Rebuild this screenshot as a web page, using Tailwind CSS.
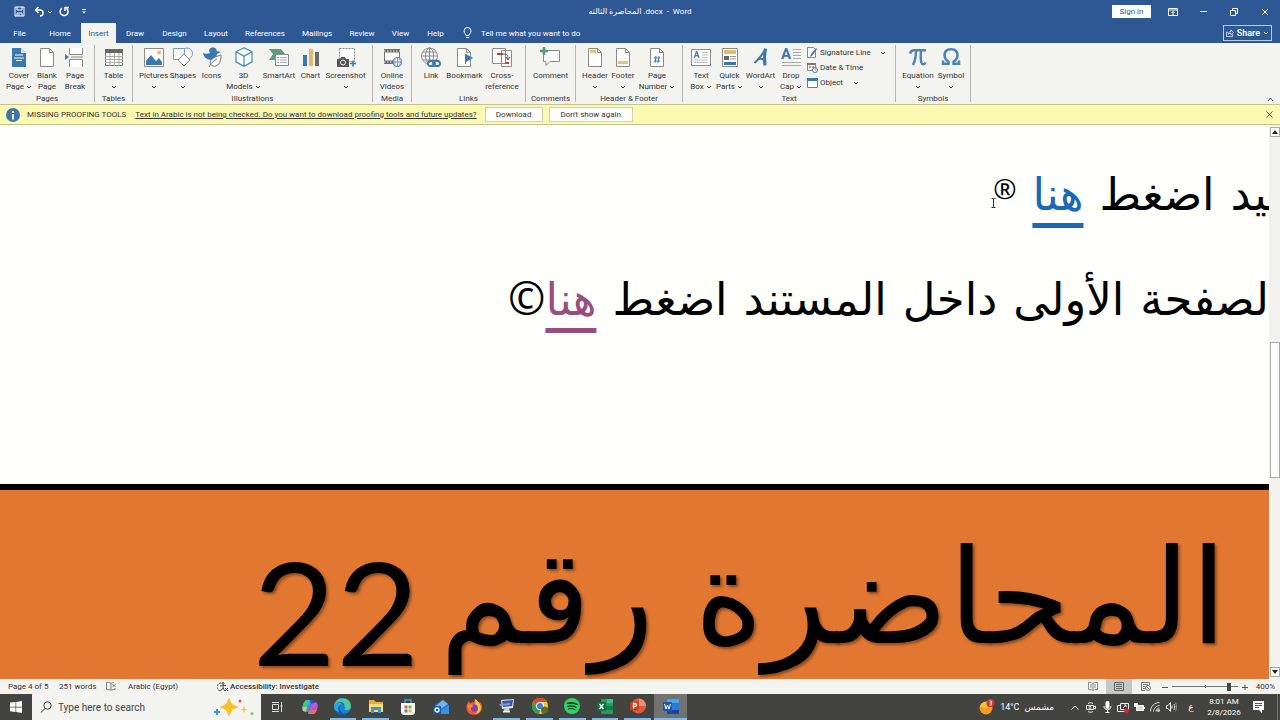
<!DOCTYPE html>
<html lang="en">
  <head>
    <meta charset="UTF-8" />
    <meta name="viewport" content="width=device-width, initial-scale=1.0" />
    <title>المحاضرة الثالثه .docx - Word</title>
    <script src="https://cdn.jsdelivr.net/npm/@tailwindcss/browser@4"></script>
  </head>
  <body class="flex flex-col h-screen overflow-hidden bg-[#fffffc] font-['Roboto','DejaVu_Sans',sans-serif] text-[8px] leading-[11px] text-[#333]">
    <svg class="hidden">
      <symbol id="chev" viewBox="0 0 6 4"><path d="M1 1l2 2 2-2" fill="none" stroke="currentColor" /></symbol>
    </svg>

    <header class="bg-[#2d5894] text-white">
      <!-- Title bar -->
      <div class="grid grid-cols-[1fr_auto_1fr] items-center h-[23px]">
        <div class="flex items-center pl-[14px]">
          <button aria-label="Save"><svg class="w-[11px] h-[11px]" viewBox="0 0 11 11" fill="none" stroke="#fff"><path d="M1 1h9v9H1zM3 1v3h5V1M3 10V7h5v3M5 8v2" /></svg></button>
          <button aria-label="Undo" class="ml-[9px]"><svg class="w-[11px] h-[11px]" viewBox="0 0 11 11" fill="none" stroke="#fff" stroke-width="1.5"><path d="M4.500 1L1.500 4l3 3M1.500 4H6a3 3 0 013 3c0 2-1 3-3 3" /></svg></button>
          <button aria-label="Undo list" class="ml-[2px]"><svg class="w-[6px] h-[4px]"><use href="#chev" /></svg></button>
          <button aria-label="Repeat" class="ml-[6px]"><svg class="w-[11px] h-[11px]" viewBox="0 0 11 11" fill="none" stroke="#fff" stroke-width="1.500"><path d="M3 2.200a4 4 0 104.500.2M6 1v4M6 1.500h4" /></svg></button>
          <button aria-label="Customize toolbar" class="ml-[12px]"><svg class="w-[4px] h-[5px]" viewBox="0 0 5 6" fill="#fff"><path d="M0 0h5v1H0zM0 3h5L2.500 5.500z" /></svg></button>
        </div>
        <h1 class="whitespace-pre"><bdi>المحاضرة الثالثه</bdi> .docx  -  Word</h1>
        <div class="flex items-center justify-end pr-[11px]">
          <button class="bg-white text-[#2d5894] w-[39px] h-[13px]">Sign in</button>
          <button aria-label="Ribbon display options" class="ml-[17px]"><svg class="w-[10px] h-[8px]" viewBox="0 0 10 8" fill="none" stroke="#fff"><path d="M.500.500h9v7h-9zM.500 2h9M5 7V3.500M3.500 5L5 3.500 6.500 5" /></svg></button>
          <button aria-label="Minimize" class="ml-[22px]"><svg class="w-[7px] h-[7px]" viewBox="0 0 7 7"><path d="M0 3.500h7" stroke="#fff" /></svg></button>
          <button aria-label="Restore" class="ml-[23px]"><svg class="w-[8px] h-[8px]" viewBox="0 0 8 8" fill="none" stroke="#fff"><path d="M.500 2.500h5v5h-5zM2.500 2V.500h5v5H6" /></svg></button>
          <button aria-label="Close" class="ml-[23px]"><svg class="w-[8px] h-[8px]" viewBox="0 0 8 8"><path d="M1 1l6 6M7 1L1 7" stroke="#fff" /></svg></button>
        </div>
      </div>
      <!-- Tabs -->
      <nav class="flex items-stretch h-[20px]">
        <button class="w-[39px]">File</button>
        <button class="w-[42px]">Home</button>
        <button class="w-[35px] bg-[#f3f3f0] text-[#2d5894]">Insert</button>
        <button class="w-[38px]">Draw</button>
        <button class="w-[41px]">Design</button>
        <button class="w-[42px]">Layout</button>
        <button class="w-[56px]">References</button>
        <button class="w-[48px]">Mailings</button>
        <button class="w-[42px]">Review</button>
        <button class="w-[35px]">View</button>
        <button class="w-[35px]">Help</button>
        <button class="flex items-center gap-[9px] ml-[10px]">
          <svg class="w-[9px] h-[12px]" viewBox="0 0 9 12" fill="none" stroke="#fff"><path d="M3 8.500C3 7 1 6 1 4a3.500 3.500 0 017 0c0 2-2 3-2 4.500zM3 10.500h3" /></svg>
          Tell me what you want to do
        </button>
        <button class="flex items-center gap-[3px] ml-auto mr-[8px] my-[2px] px-[2px] border border-[#b9cbe5] font-semibold text-[9px]">
          <svg class="w-[8px] h-[8px]" viewBox="0 0 9 9" fill="none" stroke="#fff"><path d="M2 3.500H.500v5h7V6M2.500 6c0-2 1-3 3-3V1L8.500 4l-3 2.500V5c-1.500 0-2 0-3 1z" stroke-width=".8" /></svg>
          Share
          <svg class="w-[6px] h-[4px]"><use href="#chev" /></svg>
        </button>
      </nav>
    </header>

    <!-- Ribbon -->
    <section class="flex h-[62px] pt-[2px] pb-[2px] bg-[#f3f3f0] border-b border-[#c4c38b]">
      <div class="flex flex-col justify-between items-center w-[95px] border-r border-[#b5b5b3]">
        <div class="flex">
          <button class="flex flex-col items-center w-[28px] pt-[2px]">
            <svg class="w-[20px] h-[20px] mb-[3px]" viewBox="0 0 20 20"><path d="M3 1h9l5 5v14H3z" fill="#3a78b0" /><path d="M12 1v5h5z" fill="#d5e4f2" /><path d="M6 8h8M5 11h10M7 13.500h6" stroke="#fff" /></svg>
            Cover<span class="flex items-center gap-[2px]">Page <svg class="w-[6px] h-[4px]"><use href="#chev" /></svg></span>
          </button>
          <button class="flex flex-col items-center w-[28px] pt-[2px]">
            <svg class="w-[20px] h-[20px] mb-[3px]" viewBox="0 0 20 20" fill="#fff" stroke="#8a8a88"><path d="M3.500 1.500h9l4 4v14h-13zM12.500 1.500v4h4" /></svg>
            Blank<span>Page</span>
          </button>
          <button class="flex flex-col items-center w-[28px] pt-[2px]">
            <svg class="w-[20px] h-[20px] mb-[3px]" viewBox="0 0 20 20"><path d="M4.500 1v6.500h13V1M4.500 20v-7.500h13V20" fill="#fff" stroke="#8a8a88" /><path d="M6 10h12" stroke="#8a8a88" /><path d="M0 7l4 3-4 3z" fill="#3a78b0" /></svg>
            Page<span>Break</span>
          </button>
        </div>
        <h2 class="leading-[7px]">Pages</h2>
      </div>

      <div class="flex flex-col justify-between items-center w-[38px] border-r border-[#b5b5b3]">
        <button class="flex flex-col items-center pt-[2px]">
          <svg class="w-[20px] h-[20px] mb-[3px]" viewBox="0 0 20 20"><path d="M1.500 2.500h17v16h-17z" fill="#fff" stroke="#777" /><path d="M1 2h18v4H1z" fill="#666" /><path d="M1 9.500h18M1 12.500h18M1 15.500h18M6 6v13M10.500 6v13M15 6v13" stroke="#aaa" /></svg>
          Table<svg class="w-[6px] h-[4px] mt-[4px]"><use href="#chev" /></svg>
        </button>
        <h2 class="leading-[7px]">Tables</h2>
      </div>

      <div class="flex flex-col justify-between items-center w-[240px] border-r border-[#b5b5b3]">
        <div class="flex items-start">
          <button class="flex flex-col items-center w-[32px] pt-[2px]">
            <svg class="w-[20px] h-[20px] mb-[3px]" viewBox="0 0 20 20"><path d="M.500 1.500h19v18H.500z" fill="#fff" stroke="#8a8a88" /><path d="M2 18v-4l5-6 5 6 3-3 3 4v3z" fill="#3a78b0" /><circle cx="15" cy="5.500" r="2" fill="#e9bd5b" /></svg>
            Pictures<svg class="w-[6px] h-[4px] mt-[4px]"><use href="#chev" /></svg>
          </button>
          <button class="flex flex-col items-center w-[27px] pt-[2px]">
            <svg class="w-[20px] h-[20px] mb-[3px]" viewBox="0 0 20 20" fill="#fff" stroke="#6a9cc8"><circle cx="14" cy="6.500" r="5.500" /><path d="M.500 1.500h11v11H.500z" /><path d="M11 7l6 6-6 6-6-6z" stroke="#8a8a88" /></svg>
            Shapes<svg class="w-[6px] h-[4px] mt-[4px]"><use href="#chev" /></svg>
          </button>
          <button class="flex flex-col items-center w-[30px] pt-[2px]">
            <svg class="w-[20px] h-[20px] mb-[3px]" viewBox="0 0 20 20"><path d="M1 6c2 1 5 1 7 0C6 3 8 0 11.500.500 14 1 15 3 14.500 4L19 5l-4 2c-1 2 0 2 0 3-2 4-12 5-14-4z" fill="#3a78b0" /><path d="M19 8c0 8-3 12-8 11-5-2-4-8 8-11zM7 20c2-4 4-6 8-8" fill="#fff" stroke="#777" /></svg>
            Icons
          </button>
          <button class="flex flex-col items-center w-[34px] pt-[2px]">
            <svg class="w-[20px] h-[20px] mb-[3px]" viewBox="0 0 20 20" fill="#fff" stroke="#3a86b8" stroke-width="1.200"><path d="M10 .800l8 4v10l-8 4.500-8-4.500v-10zM2 4.800l8 4.500 8-4.500M10 9.300v10" /></svg>
            3D<span class="flex items-center gap-[2px]">Models <svg class="w-[6px] h-[4px]"><use href="#chev" /></svg></span>
          </button>
          <button class="flex flex-col items-center w-[37px] pt-[2px]">
            <svg class="w-[20px] h-[20px] mb-[3px]" viewBox="0 0 20 20"><path d="M0 2h12l4 5-4 6H0l4-6z" fill="#5d9c80" /><path d="M6.500 7.500h13v11h-13z" fill="#fff" stroke="#8a8a88" /><path d="M8 10.500h2M11 10.500h7M8 13h2M11 13h7M8 15.500h2M11 15.500h7" stroke="#aaa" /></svg>
            SmartArt
          </button>
          <button class="flex flex-col items-center w-[26px] pt-[2px]">
            <svg class="w-[20px] h-[20px] mb-[3px]" viewBox="0 0 20 20"><path d="M2 8h4v11H2z" fill="#3a78b0" /><path d="M8 2h4v17H8z" fill="#e6b865" /><path d="M14 5h4v14h-4z" fill="#6a6a68" /></svg>
            Chart
          </button>
          <button class="flex flex-col items-center w-[44px] pt-[2px]">
            <svg class="w-[20px] h-[20px] mb-[3px]" viewBox="0 0 20 20"><path d="M3.500 1.500h15v13h-15z" fill="#fff" stroke="#888" stroke-dasharray="2 1" /><path d="M1 12h3l1-2h4l1 2h3v8H1z" fill="#555" /><circle cx="7" cy="15.500" r="2.500" fill="#555" stroke="#fff" /><path d="M17 13.500v6M14 16.500h6" stroke="#3a78b0" stroke-width="1.500" /></svg>
            Screenshot<svg class="w-[6px] h-[4px] mt-[4px]"><use href="#chev" /></svg>
          </button>
        </div>
        <h2 class="leading-[7px]">Illustrations</h2>
      </div>

      <div class="flex flex-col justify-between items-center w-[39px] border-r border-[#b5b5b3]">
        <button class="flex flex-col items-center pt-[2px]">
          <svg class="w-[20px] h-[20px] mb-[3px]" viewBox="0 0 20 20"><path d="M2.500 2.500h15v14h-15z" fill="#fff" stroke="#777" /><path d="M2 4h16M2 15h16" stroke="#666" stroke-width="3" /><path d="M2 4h16M2 15h16" stroke="#fff" stroke-dasharray="1.500 1.500" /><circle cx="15.500" cy="15" r="4.500" fill="#fff" stroke="#3a78b0" /><path d="M11 15h9M15.500 10.500v9M13.500 11.500c-1 2-1 5 0 7M17.500 11.500c1 2 1 5 0 7" stroke="#3a78b0" stroke-width=".7" fill="none" /></svg>
          Online<span>Videos</span>
        </button>
        <h2 class="leading-[7px]">Media</h2>
      </div>

      <div class="flex flex-col justify-between items-center w-[114px] border-r border-[#b5b5b3]">
        <div class="flex items-start">
          <button class="flex flex-col items-center w-[27px] pt-[2px]">
            <svg class="w-[20px] h-[20px] mb-[3px]" viewBox="0 0 20 20" fill="none"><g stroke="#888"><circle cx="8.500" cy="9" r="8" fill="#fff" /><ellipse cx="8.500" cy="9" rx="4" ry="8" /><path d="M8.500 1v16M.500 9h16M2 5h13M2 13h13" /></g><g stroke="#3a78b0" stroke-width="1.800"><rect x="7" y="14" width="7" height="5" rx="2.500" fill="#f3f3f0" /><rect x="12" y="14" width="7" height="5" rx="2.500" /></g></svg>
            Link
          </button>
          <button class="flex flex-col items-center w-[40px] pt-[2px]">
            <svg class="w-[20px] h-[20px] mb-[3px]" viewBox="0 0 20 20"><path d="M2.500 1.500h9l4 4v14h-13zM11.500 1.500v4h4" fill="#fff" stroke="#8a8a88" /><path d="M10.500 7v10" stroke="#3a78b0" /><path d="M11 7l7 4-7 4z" fill="#3a78b0" /></svg>
            Bookmark
          </button>
          <button class="flex flex-col items-center w-[35px] pt-[2px]">
            <svg class="w-[20px] h-[20px] mb-[3px]" viewBox="0 0 20 20"><path d="M.500 1.500h13v15H.500zM9.500 3.500h10v16h-10z" fill="#fff" stroke="#8a8a88" /><path d="M5 7h6M13 16h4" stroke="#c8402f" stroke-width="2" /><path d="M11 7c4 0 5 1 5 5M14 10l2 3 2-3" stroke="#555" fill="none" /></svg>
            Cross-<span>reference</span>
          </button>
        </div>
        <h2 class="leading-[7px]">Links</h2>
      </div>

      <div class="flex flex-col justify-between items-center w-[50px] border-r border-[#b5b5b3]">
        <button class="flex flex-col items-center pt-[2px]">
          <svg class="w-[20px] h-[20px] mb-[3px]" viewBox="0 0 20 20"><path d="M3.500 3.500h16v11H10l-4 4v-4H3.500z" fill="#fff" stroke="#8a8a88" /><path d="M4 0v8M0 4h8" stroke="#4c9c7c" stroke-width="2.500" /></svg>
          Comment
        </button>
        <h2 class="leading-[7px]">Comments</h2>
      </div>

      <div class="flex flex-col justify-between items-center w-[107px] border-r border-[#b5b5b3]">
        <div class="flex items-start">
          <button class="flex flex-col items-center w-[28px] pt-[2px]">
            <svg class="w-[20px] h-[20px] mb-[3px]" viewBox="0 0 20 20"><path d="M3.500 1.500h9l4 4v14h-13zM12.500 1.500v4h4" fill="#fff" stroke="#8a8a88" /><path d="M5 3h6v3H5z" fill="#e3c779" /></svg>
            Header<svg class="w-[6px] h-[4px] mt-[4px]"><use href="#chev" /></svg>
          </button>
          <button class="flex flex-col items-center w-[28px] pt-[2px]">
            <svg class="w-[20px] h-[20px] mb-[3px]" viewBox="0 0 20 20"><path d="M3.500 1.500h9l4 4v14h-13zM12.500 1.500v4h4" fill="#fff" stroke="#8a8a88" /><path d="M5 14h10v3H5z" fill="#e3c779" /></svg>
            Footer<svg class="w-[6px] h-[4px] mt-[4px]"><use href="#chev" /></svg>
          </button>
          <button class="flex flex-col items-center w-[40px] pt-[2px]">
            <svg class="w-[20px] h-[20px] mb-[3px]" viewBox="0 0 20 20"><path d="M3.500 1.500h9l4 4v14h-13zM12.500 1.500v4h4" fill="#fff" stroke="#8a8a88" /><path d="M9 9l-1 7M12 9l-1 7M7 11h6M7 14h6" stroke="#3a78b0" /></svg>
            Page<span class="flex items-center gap-[2px]">Number <svg class="w-[6px] h-[4px]"><use href="#chev" /></svg></span>
          </button>
        </div>
        <h2 class="leading-[7px]">Header &amp; Footer</h2>
      </div>

      <div class="flex flex-col justify-between items-center w-[213px] border-r border-[#b5b5b3]">
        <div class="flex items-start">
          <button class="flex flex-col items-center w-[28px] pt-[2px]">
            <svg class="w-[20px] h-[20px] mb-[3px]" viewBox="0 0 20 20"><path d="M.500 2.500h19v16H.500z" fill="#fff" stroke="#8a8a88" /><path d="M11 5.500h6M11 8h6M11 10.500h6M3 13h14M3 15.500h14" stroke="#bbb" /><text x="2.500" y="11" font-size="9" font-weight="700" fill="#3a78b0">A</text></svg>
            Text<span class="flex items-center gap-[2px]">Box <svg class="w-[6px] h-[4px]"><use href="#chev" /></svg></span>
          </button>
          <button class="flex flex-col items-center w-[29px] pt-[2px]">
            <svg class="w-[20px] h-[20px] mb-[3px]" viewBox="0 0 20 20"><path d="M2.500 1.500h15v18h-15z" fill="#fff" stroke="#8a8a88" /><path d="M4 3h12v4H4z" fill="#e3b96d" /><path d="M4 9h5v4H4z" fill="#666" /><path d="M10 9.500h6M10 12h6" stroke="#999" /><path d="M4 15h12v3H4z" fill="#3a78b0" /></svg>
            Quick<span class="flex items-center gap-[2px]">Parts <svg class="w-[6px] h-[4px]"><use href="#chev" /></svg></span>
          </button>
          <button class="flex flex-col items-center w-[33px] pt-[2px]">
            <svg class="w-[20px] h-[20px] mb-[3px]" viewBox="0 0 20 20" fill="none" stroke="#3a78b0"><path d="M3.500 16C7 13 11 8 14 3" stroke-width="2" /><path d="M14.500 1.500c-1 5-1.500 11-.500 17" stroke-width="3" /><path d="M7 12c3-1 5 0 8 1" stroke-width="2" /></svg>
            WordArt<svg class="w-[6px] h-[4px] mt-[4px]"><use href="#chev" /></svg>
          </button>
          <button class="flex flex-col items-center w-[28px] pt-[2px]">
            <svg class="w-[20px] h-[20px] mb-[3px]" viewBox="0 0 20 20"><path d="M12 2.500h8M12 5.500h8M12 8.500h8M12 11.500h8M1 15.500h19M1 18.500h19" stroke="#aaa" /><text x="0" y="12" font-size="15" font-weight="700" fill="#3a78b0">A</text></svg>
            Drop<span class="flex items-center gap-[2px]">Cap <svg class="w-[6px] h-[4px]"><use href="#chev" /></svg></span>
          </button>
          <div class="flex flex-col w-[86px] pl-[2px]">
            <button class="flex items-center h-[15px]">
              <svg class="w-[11px] h-[11px] mr-[2px]" viewBox="0 0 11 11"><path d="M.500.500h6l2 2v8h-8z" fill="#fff" stroke="#888" /><path d="M10 2L5 9l-2 .500L4 7l5-6z" fill="#3a78b0" /></svg>
              Signature Line<svg class="w-[6px] h-[4px] ml-auto mr-[5px]"><use href="#chev" /></svg>
            </button>
            <button class="flex items-center h-[15px]">
              <svg class="w-[11px] h-[11px] mr-[2px]" viewBox="0 0 11 11"><path d="M.500 1.500h8v7h-8z" fill="#fff" stroke="#888" /><path d="M0 1h9v2H0z" fill="#777" /><path d="M2 4h2v2H2zM5 4h2v2H5z" fill="#e09a4f" /><circle cx="8" cy="8" r="2.500" fill="#fff" stroke="#3a78b0" /><path d="M8 6.500V8h1.500" stroke="#3a78b0" fill="none" stroke-width=".7" /></svg>
              Date &amp; Time
            </button>
            <button class="flex items-center h-[15px]">
              <svg class="w-[11px] h-[11px] mr-[2px]" viewBox="0 0 11 11"><path d="M.500 1.500h10v9H.500z" fill="#fff" stroke="#777" /><path d="M0 1h11v3H0z" fill="#3a78b0" /></svg>
              Object<svg class="w-[6px] h-[4px] ml-[10px]"><use href="#chev" /></svg>
            </button>
          </div>
        </div>
        <h2 class="leading-[7px]">Text</h2>
      </div>

      <div class="flex flex-col justify-between items-center w-[75px] border-r border-[#b5b5b3]">
        <div class="flex">
          <button class="flex flex-col items-center w-[36px] pt-[2px]">
            <svg class="w-[20px] h-[20px] mb-[3px]" viewBox="0 0 20 20" fill="none" stroke="#4a84ba"><path d="M2 6.500C3 4 4 3.300 6 3.300h12" stroke-width="2.600" /><path d="M8 4c0 5-.500 9-3 14" stroke-width="2.400" /><path d="M13 4c-.500 6-.500 9 .500 12 1 2 3 1.500 4-.500" stroke-width="2.400" /></svg>
            Equation<svg class="w-[6px] h-[4px] mt-[4px]"><use href="#chev" /></svg>
          </button>
          <button class="flex flex-col items-center w-[30px] pt-[2px]">
            <svg class="w-[20px] h-[20px] mb-[3px]" viewBox="0 0 20 20" fill="none" stroke="#4a84ba" stroke-width="2.500"><path d="M2 13.500v3.300h5.500v-2C5 13 3.500 11 3.500 8.200 3.500 4.500 6 2.200 10 2.200s6.500 2.300 6.500 6c0 2.800-1.500 4.800-4 6.600v2H18v-3.300" /></svg>
            Symbol<svg class="w-[6px] h-[4px] mt-[4px]"><use href="#chev" /></svg>
          </button>
        </div>
        <h2 class="leading-[7px]">Symbols</h2>
      </div>
      <button aria-label="Collapse ribbon" class="self-end ml-auto mr-[6px]"><svg class="w-[7px] h-[5px]" viewBox="0 0 7 5"><path d="M1 4l2.500-3L6 4" fill="none" stroke="#444" /></svg></button>
    </section>

    <!-- Message bar -->
    <aside class="flex items-center h-[20px] pl-[6px] pr-[7px] bg-[#fcfab2] border-b border-[#c4c38b]">
      <svg class="w-[14px] h-[14px]" viewBox="0 0 14 14"><circle cx="7" cy="7" r="7" fill="#3c78ae" /><path d="M6 3h2v2H6zM6 6h2v5.500H6z" fill="#fff" /></svg>
      <span class="ml-[7px]">MISSING PROOFING TOOLS</span>
      <a href="#" class="ml-[9px] underline">Text in Arabic is not being checked. Do you want to download proofing tools and future updates?</a>
      <button class="ml-[8px] w-[58px] h-[15px] bg-white border border-[#d2d0a4]">Download</button>
      <button class="ml-[6px] w-[84px] h-[15px] bg-white border border-[#d2d0a4]">Don't show again</button>
      <button aria-label="Close message" class="ml-auto"><svg class="w-[7px] h-[7px]" viewBox="0 0 7 7"><path d="M.500.500l6 6M6.500.500l-6 6" stroke="#555" /></svg></button>
    </aside>

    <!-- Document -->
    <main class="relative flex flex-1 min-h-0">
      <article dir="rtl" class="flex flex-col flex-1 min-w-0 overflow-hidden text-black font-['DejaVu_Sans',sans-serif] whitespace-nowrap">
        <div class="h-[359px] shrink-0 pt-[34px] text-[45px] leading-[72px]">
          <p class="flex gap-[16px]">
            <span class="-mr-[12px]">ـيد</span>
            <span>اضغط</span>
            <a href="#" class="text-[#1c68b8] underline underline-offset-[13px] decoration-[5px]">هنا</a>
            <sup class="top-0 text-[28px] leading-[58px] font-['Open_Sans']">®</sup>
          </p>
          <p class="flex items-baseline gap-[16px] mt-[31px]">
            <span>لصفحة</span>
            <span>الأولى</span>
            <span>داخل</span>
            <span>المستند</span>
            <span>اضغط</span>
            <a href="#" class="text-[#984f7c] underline underline-offset-[13px] decoration-[5px]">هنا</a>
            <span class="-mr-[16px] font-['Open_Sans']">©</span>
          </p>
        </div>
        <div class="flex flex-1 min-h-0 gap-[40px] pr-[42px] pt-[12px] bg-[#e27732] border-t-[6px] border-black text-[132px] leading-[190px] text-shadow-[2px_2px_3px_#00000066]">
          <span>المحاضرة</span>
          <span>رقم</span>
          <span class="-mr-[20px] pt-[14px] text-[144px] font-['Lato']">22</span>
        </div>
      </article>
      <svg class="absolute left-[991px] top-[73px] w-[5px] h-[10px]" viewBox="0 0 5 10"><path d="M.500.500h1.500l.500.500.500-.500H4.500M2.500 1v8M.500 9.500h4" fill="none" stroke="#333" /></svg>
      <div class="flex flex-col items-center w-[11px] py-[2px] bg-[#f1f1ee]">
        <button aria-label="Scroll up" class="flex items-center justify-center w-[10px] h-[10px] bg-white border border-[#aaa]"><svg class="w-[6px] h-[4px]" viewBox="0 0 6 4"><path d="M0 4l3-4 3 4z" fill="#222" /></svg></button>
        <div class="w-[10px] h-[136px] mt-[205px] bg-white border border-[#aaa]"></div>
        <button aria-label="Scroll down" class="flex items-center justify-center w-[10px] h-[10px] mt-auto bg-white border border-[#aaa]"><svg class="w-[6px] h-[4px]" viewBox="0 0 6 4"><path d="M0 0l3 4 3-4z" fill="#222" /></svg></button>
      </div>
    </main>

    <!-- Status bar -->
    <div class="flex items-center h-[15px] pl-[8px] pr-[5px] bg-[#f3f3f0]">
      <span class="w-[51px]">Page 4 of 5</span>
      <span class="w-[47px]">251 words</span>
      <svg class="w-[10px] h-[9px]" viewBox="0 0 10 9" fill="none" stroke="#666"><path d="M5 1.500v6.500M5 1.500C4 .500 2 .500.500.500v7c1.500 0 3.500 0 4.500 1 1-1 2-1 4-1V6M5 1.500C6 .500 7 .500 8 .500M6.500 2l3 3M9.500 2l-3 3" stroke-width=".8" /></svg>
      <span class="w-[89px] pl-[12px]">Arabic (Egypt)</span>
      <button class="flex items-center gap-[2px] ml-[12px] font-medium">
        <svg class="w-[11px] h-[10px]" viewBox="0 0 11 10" fill="none" stroke="#444"><path d="M4 1a4 4 0 000 8" stroke-dasharray="2 1" /><circle cx="6" cy="1.500" r="1" /><path d="M3 4l6-.500M6 4v2L3.500 9M6 6l2 3M8 6l3 3M11 6L8 9" /></svg>
        Accessibility: Investigate
      </button>
      <div class="flex items-center ml-auto">
        <button aria-label="Read mode" class="flex justify-center w-[27px]"><svg class="w-[10px] h-[9px]" viewBox="0 0 10 9" fill="none" stroke="#777"><path d="M5 1v7.500M.500.500h3L5 1.500 6.500.500h3v7h-3L5 8.500l-1.500-1h-3zM2 3h2M2 5h2M6 3h2M6 5h2" stroke-width=".8" /></svg></button>
        <button aria-label="Print layout" class="flex items-center justify-center w-[26px] h-[15px] bg-[#c6c6c4]"><svg class="w-[10px] h-[9px]" viewBox="0 0 10 9" fill="none" stroke="#666"><path d="M.500.500h9v8h-9zM2 2.500h6M2 4.500h6M2 6.500h6" /></svg></button>
        <button aria-label="Web layout" class="flex justify-center w-[27px]"><svg class="w-[10px] h-[9px]" viewBox="0 0 10 9" fill="none" stroke="#777"><path d="M4 8.500H.500v-8h8V3M2 2.500h5M2 4.500h2M2 6.500h2" /><circle cx="7" cy="6" r="2.500" /><path d="M5 4l4 4" /></svg></button>
        <button aria-label="Zoom out" class="ml-[3px]"><svg class="w-[6px] h-[6px]" viewBox="0 0 6 6"><path d="M0 3.500h6" stroke="#555" /></svg></button>
        <div class="relative flex items-center w-[66px] mx-[4px]">
          <input type="range" aria-label="Zoom" min="0" max="100" value="89" class="w-full h-px appearance-none bg-[#777] [&::-webkit-slider-thumb]:appearance-none [&::-webkit-slider-thumb]:w-[4px] [&::-webkit-slider-thumb]:h-[8px] [&::-webkit-slider-thumb]:bg-[#444]" />
          <span class="absolute left-1/2 -top-px w-px h-[3px] bg-[#666]"></span>
        </div>
        <button aria-label="Zoom in"><svg class="w-[6px] h-[6px]" viewBox="0 0 6 6"><path d="M0 3.500h6M3 .500v6" stroke="#555" /></svg></button>
        <span class="w-[27px] text-right">400%</span>
      </div>
    </div>

    <!-- Taskbar -->
    <footer class="flex h-[26px] bg-[#43433f] text-white">
      <button aria-label="Start" class="flex items-center justify-center w-[32px]"><svg class="w-[12px] h-[12px]" viewBox="0 0 12 12" fill="#fff"><path d="M0 1.500L5.500 1v4.700H0zM6.200.900L12 0v5.700H6.200zM0 6.400h5.500V11L0 10.300zM6.200 6.400H12V12l-5.800-.900z" /></svg></button>
      <label class="flex items-center w-[229px] pl-[8px] pr-[6px] bg-[#f3f3f0] text-[#444]">
        <svg class="w-[12px] h-[12px]" viewBox="0 0 12 12" fill="none" stroke="#333"><circle cx="7.500" cy="4.500" r="3.700" /><path d="M5 7.500L.800 11.500" /></svg>
        <input type="text" aria-label="Search" placeholder="Type here to search" class="flex-1 min-w-0 ml-[6px] text-[10px] placeholder-[#444] outline-none" />
        <svg class="w-[42px] h-[20px]" viewBox="0 0 42 20"><path d="M16 2c1 5 3 7 8 8-5 1-7 3-8 8-1-5-3-7-8-8 5-1 7-3 8-8z" fill="#f8c02c" stroke="#f8c02c" stroke-width="1.500" stroke-linejoin="round" /><path d="M31 8c.500 3 1 4 4 4.500-3 .500-3.500 1.500-4 4-.500-2.500-1-3.500-4-4 3-.500 3.500-1.500 4-4.500z" fill="#f3ce5a" /><path d="M4 12v6M1 15h6" stroke="#2aa3dc" stroke-width="2" /><circle cx="27" cy="4" r="1.500" fill="#d9534a" /><circle cx="39" cy="16.500" r="1.500" fill="#8cc45a" /></svg>
      </label>
      <div class="grid grid-cols-13 w-[426px]">
        <button aria-label="Task view" class="flex items-center justify-center"><svg class="w-[12px] h-[12px]" viewBox="0 0 12 12" fill="none" stroke="#ddd"><path d="M1.500 3.500h6v5h-6zM1 1.500h7M1 10.500h7M10.500 1v10M9.500 5h2" /></svg></button>
        <button aria-label="Copilot" class="flex items-center justify-center"><svg class="w-[16px] h-[16px]" viewBox="0 0 16 16"><path d="M4.500 1H10l-3 10.500C6.500 14 1.500 13.500.500 11-.500 8 2 1.500 4.500 1z" fill="#2a9be0" /><path d="M4.500 1H8L5 8H.500C1 5 3 1.500 4.500 1z" fill="#46c08f" /><path d="M.500 8H5l-1 4.500C2 12.500 1 12 .500 11z" fill="#e3c244" /><path d="M11.500 15H6l3-10.500c.500-2.500 5.500-2 6.500.500 1 3-1.500 9.500-4 10z" fill="#b455d4" /><path d="M11.500 15H6l1.200-4H15c-1 2-2 4-3.500 4z" fill="#ee6a6a" /><path d="M8 1h3c1 0 1.500 1 2 2.500L9 5z" fill="#2456c8" /></svg></button>
        <button aria-label="Edge" class="flex items-center justify-center border-b-2 border-[#7db8e6] mx-[3px]"><svg class="w-[17px] h-[17px]" viewBox="0 0 16 16"><circle cx="8" cy="8" r="8" fill="#1a83d0" /><path d="M0 8c0-10 16-11 16 0 0 3-3 4-6 3 1-2 0-5-3-5-4 0-6 1-7 2z" fill="#4fc99c" /><path d="M0 8c1-5 9-6 10-1C6 5 4 9 6 12s5 3 8 1c-4 6-14 3-14-5z" fill="#1262b0" /><path d="M0 8c1-4 6-5 8-2C4 6 3 10 5 13 2 13 0 11 0 8z" fill="#2aa5e0" /></svg></button>
        <button aria-label="File Explorer" class="flex items-center justify-center border-b-2 border-[#7db8e6] mx-[3px]"><svg class="w-[16px] h-[15px]" viewBox="0 0 16 15"><path d="M1 1h5l2 2h7v10H1z" fill="#e5ae3a" /><path d="M1 5h14v8H1z" fill="#fbdc7b" /><path d="M3 8h10v6h-3v-3H6v3H3z" fill="#3f93d0" /></svg></button>
        <button aria-label="Store" class="flex items-center justify-center"><svg class="w-[16px] h-[16px]" viewBox="0 0 16 16"><path d="M5 5V1h6v4" fill="none" stroke="#35a0d8" stroke-width="1.500" /><path d="M1 4h14v10l-2 2H3l-2-2z" fill="#f5f5f5" /><path d="M4.500 6.500h3v3h-3z" fill="#e85c3a" /><path d="M8.500 6.500h3v3h-3z" fill="#7cb83a" /><path d="M4.500 10.500h3v3h-3z" fill="#2a94dc" /><path d="M8.500 10.500h3v3h-3z" fill="#f2b92c" /></svg></button>
        <button aria-label="Outlook" class="flex items-center justify-center"><svg class="w-[16px] h-[16px]" viewBox="0 0 16 16"><path d="M2 6l7-5 7 5v9H3z" fill="#2a78d0" /><path d="M3 7l7-6 5 4-9 6z" fill="#6fb5ee" /><path d="M3 15L16 6v9z" fill="#3b8ee0" /><rect y="7" width="8" height="8" rx="1" fill="#1257b0" /><circle cx="4" cy="11" r="2" fill="none" stroke="#fff" stroke-width="1.300" /></svg></button>
        <button aria-label="Firefox" class="flex items-center justify-center"><svg class="w-[16px] h-[16px]" viewBox="0 0 16 16"><path d="M1 5l2-3 1 2 4-1 1-3c2 2 3 2 4 4l1-1c5 6 0 13-6 13C2 16-1 11 1 5z" fill="#f5572c" /><path d="M9 0c3 2 6 5 6 9 0 3-3 6-6 6 4-3 4-7 0-9z" fill="#fcc531" /><circle cx="8" cy="9" r="3.800" fill="#7b3fc4" /><path d="M2 6c2-1 4-1 6 0-2 0-2 1-1 2-2 0-4 2 0 4-4 0-6-3-5-6z" fill="#fb8b2a" /></svg></button>
        <button aria-label="Remote desktop" class="flex items-center justify-center border-b-2 border-[#7db8e6] mx-[3px]"><svg class="w-[16px] h-[16px]" viewBox="0 0 16 16"><path d="M2 2l13-1-1 9-11 1z" fill="#dfe4ee" /><path d="M3 3l11-1-1 6-9 1z" fill="#3656a8" /><path d="M0 6l11-1v2L1 8z" fill="#7f9ad8" /><path d="M6 10h4l1 4H4z" fill="#c9ccd4" /><path d="M4 13h7v1.500H4z" fill="#eee" /></svg></button>
        <button aria-label="Chrome" class="flex items-center justify-center border-b-2 border-[#7db8e6] mx-[3px]"><svg class="w-[16px] h-[16px]" viewBox="0 0 16 16"><circle cx="8" cy="8" r="8" fill="#f7c72e" /><path d="M1 4a8 8 0 0114 0H8L5 9z" fill="#df4434" /><path d="M1 4l4 6 3 2-1 4C1 15-2 9 1 4z" fill="#2f9e4f" /><circle cx="8" cy="8" r="4" fill="#fff" /><circle cx="8" cy="8" r="3" fill="#3b7de0" /><circle cx="12.500" cy="12" r="3.500" fill="#5e6a30" /></svg></button>
        <button aria-label="Spotify" class="flex items-center justify-center border-b-2 border-[#7db8e6] mx-[3px]"><svg class="w-[16px] h-[16px]" viewBox="0 0 16 16" fill="none" stroke="#1c2a20" stroke-linecap="round"><circle cx="8" cy="8" r="8" fill="#2bd566" stroke="none" /><path d="M3.500 5.500c3-1 6.500-.700 9.500.900" stroke-width="1.600" /><path d="M4 8.300c3-.800 5.500-.500 8 .900" stroke-width="1.300" /><path d="M4.500 10.800c2.500-.600 4.500-.300 6.500.800" /></svg></button>
        <button aria-label="Excel" class="flex items-center justify-center border-b-2 border-[#7db8e6] mx-[3px]"><svg class="w-[16px] h-[15px]" viewBox="0 0 16 15"><rect x="4" width="12" height="15" rx="1" fill="#20a060" /><path d="M10 0h6v4h-6z" fill="#38c284" /><path d="M4 7h12v4H4z" fill="#137a44" /><rect y="3" width="9" height="9" rx="1" fill="#107040" /><path d="M2.500 5l4 5M6.500 5l-4 5" stroke="#fff" stroke-width="1.300" /></svg></button>
        <button aria-label="PowerPoint" class="flex items-center justify-center border-b-2 border-[#7db8e6] mx-[3px]"><svg class="w-[16px] h-[16px]" viewBox="0 0 16 16"><circle cx="8.500" cy="8" r="7.500" fill="#e0583c" /><path d="M9 .500A7.500 7.500 0 0116 8H9z" fill="#f4906f" /><rect y="3.500" width="9" height="9" rx="1" fill="#c23f22" /><path d="M3.500 10.500v-5h1.500a1.500 1.500 0 010 3H3.500" stroke="#fff" stroke-width="1.300" fill="none" /></svg></button>
        <button aria-label="Word" class="flex items-center justify-center border-b-2 border-[#7db8e6] bg-[#72726f]"><svg class="w-[16px] h-[15px]" viewBox="0 0 16 15"><rect x="4" width="12" height="15" rx="1" fill="#2c7cd6" /><path d="M4 0h12v4H4z" fill="#49a5ee" /><path d="M4 11h12v4H4z" fill="#1749a0" /><rect y="3" width="9" height="9" rx="1" fill="#1b56b4" /><path d="M1.500 5l1.500 5L4.500 6 6 10l1.500-5" stroke="#fff" fill="none" /></svg></button>
      </div>
      <div class="flex items-center ml-auto pr-[2px]">
        <button class="flex items-center gap-[5px] text-[9px]">
          <svg class="w-[16px] h-[16px]" viewBox="0 0 16 16"><circle cx="7" cy="9" r="6.500" fill="#f49b22" /><path d="M1 7a6.500 6.500 0 0110-3l-4 6z" fill="#fbbc3a" /><circle cx="11.500" cy="4" r="4" fill="#d3362c" /><path d="M10.500 2h2v4M10.500 4h2M10.500 6h2" fill="none" stroke="#fff" stroke-width=".8" /></svg>
          <span>14°C</span><span>مشمس</span>
        </button>
        <button aria-label="Hidden icons" class="flex justify-center w-[16px] ml-[13px]"><svg class="w-[8px] h-[5px]" viewBox="0 0 8 5"><path d="M.500 4.500L4 1l3.500 3.500" fill="none" stroke="#eee" /></svg></button>
        <button aria-label="Meet now" class="flex justify-center w-[16px]"><svg class="w-[10px] h-[11px]" viewBox="0 0 10 11" fill="none" stroke="#eee"><path d="M.500 3.500h7v4h-7zM7.500 5l2-1v3l-2-1M2 1.500c2-1 3-1 5 0M2 9.500c2 1 3 1 5 0" /><circle cx="4" cy="5.500" r="1" /></svg></button>
        <button aria-label="Microphone" class="flex justify-center w-[16px]"><svg class="w-[9px] h-[12px]" viewBox="0 0 9 12"><rect x="2.500" width="4" height="8" rx="2" fill="#fff" /><path d="M1 5c0 5 7 5 7 0M4.500 9v2.500M2.500 11.500h4" stroke="#fff" fill="none" /></svg></button>
        <button aria-label="Display" class="flex justify-center w-[16px]"><svg class="w-[12px] h-[11px]" viewBox="0 0 12 11" fill="none" stroke="#eee"><path d="M3.500 1.500h8v6h-8zM3.500 3.500h-3v6h8M6 6l3-3M7 3h2v2" /><circle cx="9.500" cy="8.500" r="2.500" fill="#c8283c" stroke="none" /></svg></button>
        <button aria-label="Battery" class="flex justify-center w-[16px]"><svg class="w-[11px] h-[8px]" viewBox="0 0 11 8"><path d="M2.500 2.500h7v5h-7z" fill="#ddd" stroke="#fff" /><path d="M10 4h1v2h-1zM0 0h4v4H0z" fill="#fff" /></svg></button>
        <button aria-label="Wi-Fi" class="flex justify-center w-[16px]"><svg class="w-[10px] h-[10px]" viewBox="0 0 10 10" fill="none" stroke="#ddd"><path d="M.500 9.500c0-5 4-9 9-9M3.500 9.500c0-3 3-6 6-6M6 9.500c0-2 2-3.500 3.500-3.500" /><circle cx="8.500" cy="8.500" r="1" fill="#ddd" /></svg></button>
        <button aria-label="Volume" class="flex justify-center w-[16px]"><svg class="w-[11px] h-[10px]" viewBox="0 0 11 10" fill="none" stroke="#eee"><path d="M.500 3.500H2l2.500-3v9L2 6.500H.500zM6 3.500v3M8 2c1 2 1 4 0 6" /><path d="M9.500.500c1.500 3 1.500 6 0 9" stroke="#888" /></svg></button>
        <button aria-label="Keyboard language" class="w-[24px] text-[9px]">ع</button>
        <time class="w-[42px] text-center">8:01 AM<br />2/8/2026</time>
        <button aria-label="Notifications" class="flex justify-center w-[28px] mr-[4px]"><svg class="w-[12px] h-[12px]" viewBox="0 0 12 12"><path d="M0 0h11v9H9v3L6 9H0z" fill="#fff" /><path d="M2 2.500h7M2 4.500h7M2 6.500h4" stroke="#555" /></svg></button>
        <span class="w-px h-[26px] bg-[#777]"></span>
      </div>
    </footer>
  </body>
</html>
